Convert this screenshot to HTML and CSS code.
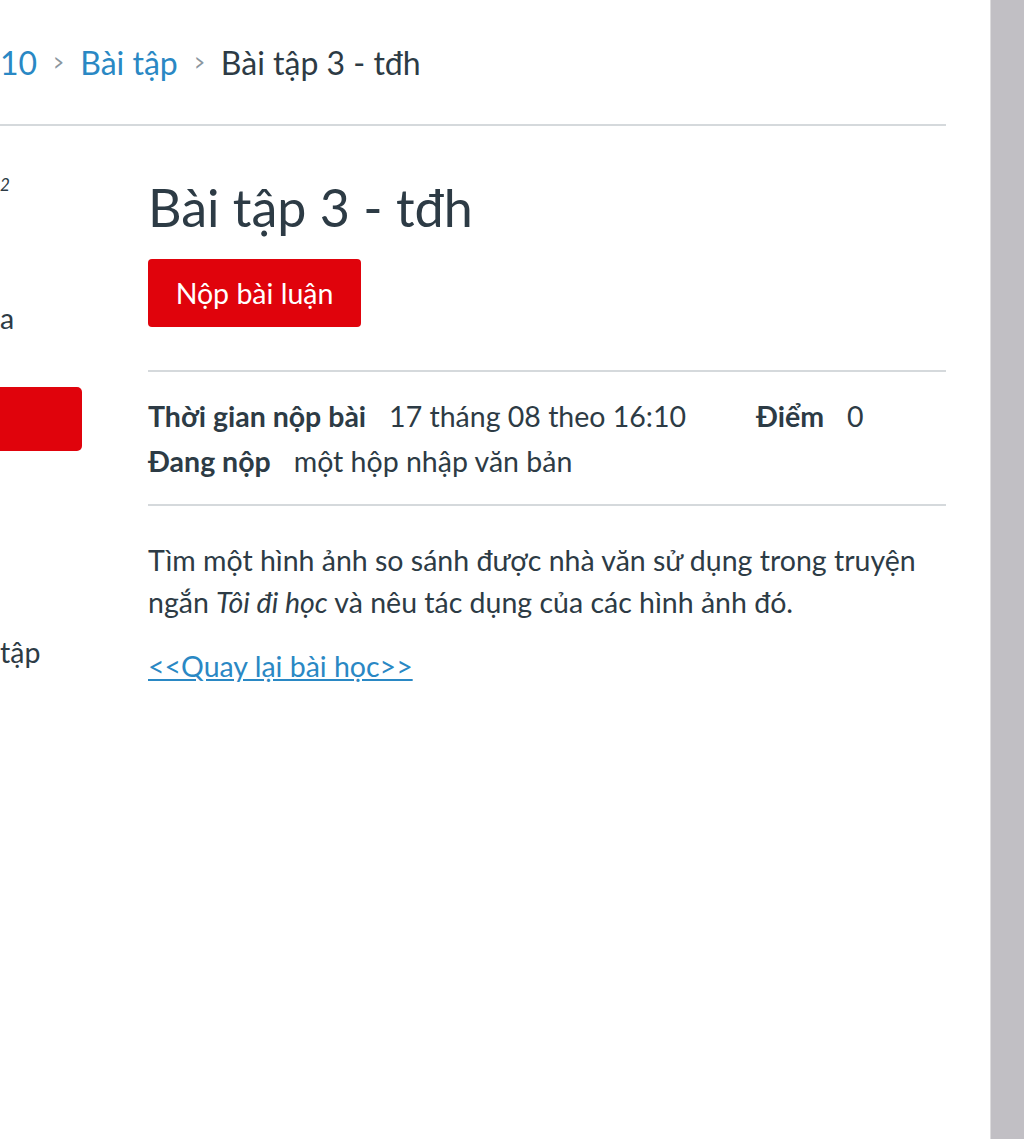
FILE: index.html
```html
<!DOCTYPE html>
<html lang="vi">
<head>
    <meta charset="UTF-8">
    <meta name="viewport" content="width=device-width, initial-scale=1.0">
    <title>Bài tập 3 - tđh</title>
    <link rel="stylesheet" href="styles.css">
</head>
<body>
<div class="page">
    <div class="main">
        <nav class="breadcrumbs">
            <a href="#" class="crumb-link">10</a>
            <span class="sep">&gt;</span>
            <a href="#" class="crumb-link">Bài tập</a>
            <span class="sep">&gt;</span>
            <span class="crumb-current">Bài tập 3 - tđh</span>
        </nav>

        <div class="layout">
            <aside class="sidebar">
                <div class="side-sup">2</div>
                <div class="side-item side-a">a</div>
                <div class="side-button"></div>
                <div class="side-item side-tap">tập</div>
            </aside>

            <div class="content">
                <h1 class="title">Bài tập 3 - tđh</h1>
                <button class="submit-btn">Nộp bài luận</button>

                <div class="details">
                    <div class="detail-row">
                        <span class="detail-label">Thời gian nộp bài</span>
                        <span class="detail-value due">17 tháng 08 theo 16:10</span>
                        <span class="detail-label">Điểm</span>
                        <span class="detail-value">0</span>
                    </div>
                    <div class="detail-row">
                        <span class="detail-label">Đang nộp</span>
                        <span class="detail-value">một hộp nhập văn bản</span>
                    </div>
                </div>

                <div class="description">
                    <p>Tìm một hình ảnh so sánh được nhà văn sử dụng trong truyện ngắn <em>Tôi đi học</em> và nêu tác dụng của các hình ảnh đó.</p>
                    <p><a href="#" class="back-link">&lt;&lt;Quay lại bài học&gt;&gt;</a></p>
                </div>
            </div>
        </div>
    </div>
    <div class="scrollbar"></div>
</div>
</body>
</html>
```

FILE: styles.css
```css
body {
    margin: 0;
    padding: 0;
    font-family: Lato, "Noto Sans", sans-serif;
    color: #2d3b45;
    background-color: #ffffff;
}
.page {
    display: flex;
    height: 1139px;
    overflow: hidden;
}
.main {
    flex: 1;
    padding-right: 44px;
}
.scrollbar {
    width: 33px;
    background-color: #c1bfc4;
    border-left: 1px solid #dcdbdd;
}
.breadcrumbs {
    display: flex;
    align-items: center;
    gap: 14px;
    font-size: 32px;
    border-bottom: 2px solid #d5d9dc;
    box-sizing: border-box;
    height: 126px;
}
.breadcrumbs .crumb-link {
    color: #2a88c4;
    text-decoration: none;
}
.breadcrumbs .sep {
    color: #8b969e;
    font-size: 26px;
    transform: scaleX(0.7);
}
.crumb-current {
    color: #2d3b45;
}
.layout {
    display: flex;
}
.sidebar {
    width: 148px;
    flex-shrink: 0;
    font-size: 28.5px;
}
.side-sup {
    font-size: 17px;
    font-style: italic;
    margin-top: 48px;
    height: 16px;
}
.side-a {
    margin-top: 108px;
    line-height: 40px;
}
.side-button {
    margin-top: 49px;
    width: 82px;
    height: 64px;
    background-color: #e0030c;
    border-radius: 0 5px 5px 0;
}
.side-tap {
    margin-top: 181px;
    line-height: 40px;
}
.content {
    flex: 1;
}
.title {
    font-size: 52px;
    font-weight: 400;
    margin: 52px 0 23px;
    line-height: 58px;
}
.submit-btn {
    display: block;
    background-color: #e0030c;
    color: #ffffff;
    border: none;
    border-radius: 4px;
    font-family: Lato, "Noto Sans", sans-serif;
    font-size: 28.5px;
    height: 68px;
    width: 213px;
    padding: 0;
    cursor: pointer;
}
.details {
    margin-top: 43px;
    border-top: 2px solid #d5d9dc;
    border-bottom: 2px solid #d5d9dc;
    padding: 22px 0 20px;
    font-size: 28.5px;
}
.detail-row {
    display: flex;
    line-height: 45px;
}
.detail-label {
    font-weight: 700;
    margin-right: 23px;
}
.detail-value.due {
    margin-right: 70px;
}
.description {
    font-size: 28.5px;
    line-height: 42px;
    padding-top: 33px;
}
.description p {
    margin: 0 0 22px;
}
.back-link {
    color: #2a88c4;
    text-decoration: underline;
}
```
